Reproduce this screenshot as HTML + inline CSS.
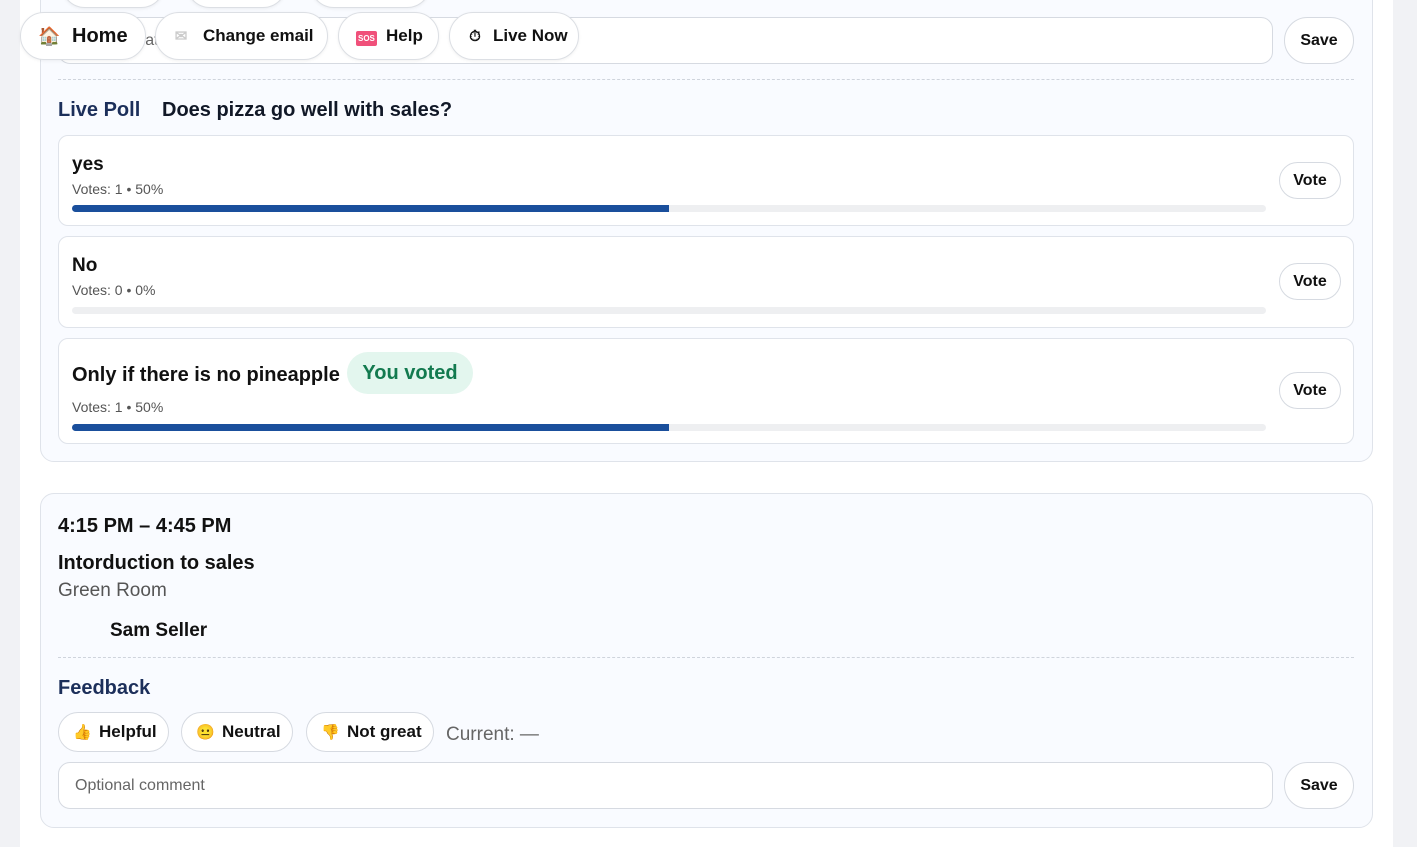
<!DOCTYPE html>
<html><head><meta charset="utf-8"><style>
*{box-sizing:border-box;margin:0;padding:0}
body{width:1417px;height:847px;overflow:hidden;background:#f1f2f5;font-family:"Liberation Sans",sans-serif;color:#111;position:relative}
.main{position:absolute;left:20px;top:0;width:1373px;height:847px;background:#fff}
.card{position:absolute;left:40px;width:1333px;background:#f9fbff;border:1px solid #dfe3ea;border-radius:14px}
.pill{position:absolute;height:48px;border:1px solid #dcdfe4;border-radius:24px;background:#fff;font-weight:bold;font-size:17px;display:flex;align-items:center;padding-left:17px;box-shadow:0 1px 3px rgba(0,0,0,.06)}
.ic{display:inline-block;width:16px;margin-right:14px;font-size:15px;text-align:center}
.input{position:absolute;left:58px;width:1215px;height:47px;border:1px solid #d6dae1;border-radius:12px;background:#fff;font-size:16px;color:#666;padding-left:16px;display:flex;align-items:center}
.save{position:absolute;left:1284px;width:70px;height:47px;border:1px solid #d6dae1;border-radius:24px;background:#fff;font-weight:bold;font-size:16px;display:flex;align-items:center;justify-content:center}
.opt{position:absolute;left:58px;width:1296px;border:1px solid #dfe3ea;border-radius:10px;background:#fff}
.opt .t{position:absolute;left:13px;font-size:19px;font-weight:bold}
.opt .v{position:absolute;left:13px;font-size:14px;color:#555}
.bar{position:absolute;left:13px;width:1194px;height:7px;background:#eeeff1;border-radius:4px}
.bar i{display:block;height:7px;width:597px;background:#1a4f9c;border-radius:4px 0 0 4px}
.vote{position:absolute;left:1220px;width:62px;height:37px;border:1px solid #d6dae1;border-radius:19px;background:#fff;font-weight:bold;font-size:16px;display:flex;align-items:center;justify-content:center}
.fb{position:absolute;top:712px;height:40px;border:1px solid #d6dae1;border-radius:20px;background:#fff;font-weight:bold;font-size:17px;display:flex;align-items:center;padding-left:14px}
.fb .ic{margin-right:10px}
.dash{position:absolute;left:58px;width:1296px;border-top:1px dashed #cfd4dc}
</style></head><body>
<div class="main"></div>
<div class="card" style="top:-20px;height:482px"></div>
<div class="pill" style="left:61px;top:-40px;width:104px"></div>
<div class="pill" style="left:186px;top:-40px;width:101px"></div>
<div class="pill" style="left:310px;top:-40px;width:121px"></div>
<div class="input" style="top:17px">Tell us what you think</div>
<div class="save" style="top:17px">Save</div>
<div class="dash" style="top:79px"></div>
<div style="position:absolute;left:58px;top:99px;font-size:20px;font-weight:bold;color:#1c2f5a">Live Poll</div>
<div style="position:absolute;left:162px;top:99px;font-size:20px;font-weight:bold;color:#111827">Does pizza go well with sales?</div>

<div class="opt" style="top:135px;height:91px"><div class="t" style="top:18px">yes</div><div class="v" style="top:45px">Votes: 1 • 50%</div><div class="bar" style="top:69px"><i></i></div><div class="vote" style="top:26px">Vote</div></div>
<div class="opt" style="top:236px;height:92px"><div class="t" style="top:18px">No</div><div class="v" style="top:45px">Votes: 0 • 0%</div><div class="bar" style="top:70px"></div><div class="vote" style="top:26px">Vote</div></div>
<div class="opt" style="top:338px;height:106px"><div class="t" style="top:25px;font-size:20px">Only if there is no pineapple</div><div style="position:absolute;left:288px;top:13px;width:126px;height:42px;border-radius:21px;background:#e3f6ee;color:#137a4f;font-weight:bold;font-size:20px;display:flex;align-items:center;justify-content:center">You voted</div><div class="v" style="top:60px">Votes: 1 • 50%</div><div class="bar" style="top:85px"><i></i></div><div class="vote" style="top:33px">Vote</div></div>

<div class="card" style="top:493px;height:335px"></div>
<div style="position:absolute;left:58px;top:515px;font-size:20px;font-weight:bold">4:15 PM – 4:45 PM</div>
<div style="position:absolute;left:58px;top:552px;font-size:20px;font-weight:bold">Intorduction to sales</div>
<div style="position:absolute;left:58px;top:580px;font-size:19px;color:#555">Green Room</div>
<div style="position:absolute;left:110px;top:620px;font-size:19px;font-weight:bold">Sam Seller</div>
<div class="dash" style="top:657px"></div>
<div style="position:absolute;left:58px;top:677px;font-size:20px;font-weight:bold;color:#1c2f5a">Feedback</div>
<div class="fb" style="left:58px;width:111px"><span class="ic">👍</span>Helpful</div>
<div class="fb" style="left:181px;width:112px"><span class="ic">😐</span>Neutral</div>
<div class="fb" style="left:306px;width:128px"><span class="ic">👎</span>Not great</div>
<div style="position:absolute;left:446px;top:724px;font-size:19px;color:#666">Current: —</div>
<div class="input" style="top:762px">Optional comment</div>
<div class="save" style="top:762px">Save</div>

<div class="pill" style="left:20px;top:12px;width:126px;font-size:20px"><span class="ic" style="font-size:18px;margin-right:18px">🏠</span>Home</div>
<div class="pill" style="left:155px;top:12px;width:173px"><span class="ic" style="color:#ccc">✉</span>Change email</div>
<div class="pill" style="left:338px;top:12px;width:101px"><span class="ic"><span style="background:#f0507a;color:#fff;font-size:8px;padding:3px 2px;border-radius:2px">SOS</span></span>Help</div>
<div class="pill" style="left:449px;top:12px;width:130px"><span class="ic" style="margin-right:10px">⏱</span>Live Now</div>
</body></html>
